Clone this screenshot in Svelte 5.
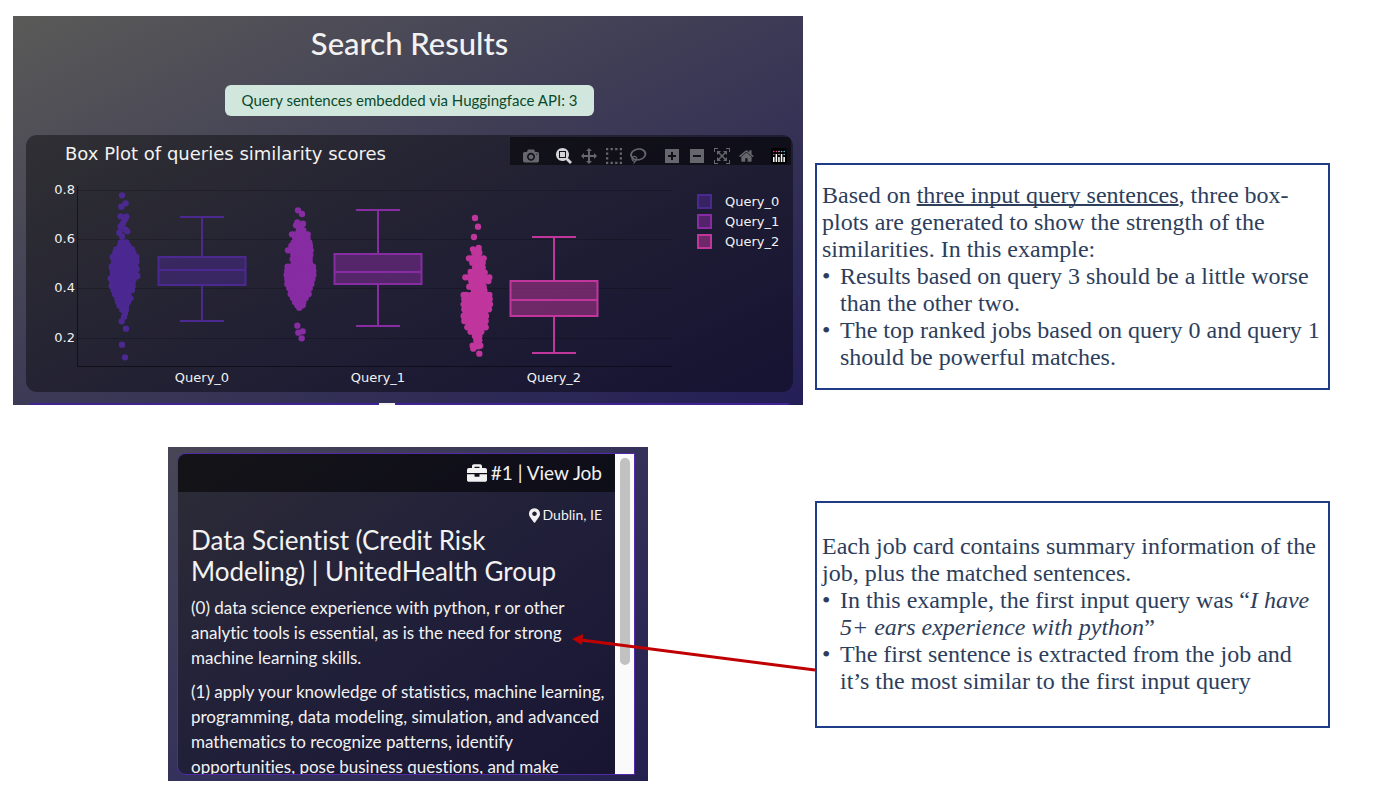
<script>
  // swarm rows are [y, first x, last x] in thirds of a chart unit, measured from the swarm origin
  const traces = [
    {
      name: "Query_0",
      color: "rgb(75,41,145)",
      center: 176, q1: 120, median: 105, q3: 92, low: 156, high: 52,
      origin: [-6, 15],
      loose: [[306, 46], [317, 70], [304, 80], [302, 109], [319, 110], [314, 120], [308, 131], [302, 140], [316, 149], [322, 154], [298, 158], [306, 169], [315, 400], [312, 410], [305, 424], [318, 446], [306, 494], [315, 532]],
      rows: [[187, 303, 319], [198, 300, 325], [208, 289, 336], [218, 286, 340], [231, 278, 349], [245, 282, 349], [259, 275, 346], [268, 277, 350], [280, 279, 346], [288, 282, 352], [295, 272, 343], [305, 277, 338], [318, 275, 338], [330, 281, 336], [343, 285, 325], [355, 292, 331], [366, 294, 324], [377, 299, 318], [389, 307, 318]],
    },
    {
      name: "Query_1",
      color: "rgb(135,44,162)",
      center: 352, q1: 119, median: 107, q3: 89, low: 161, high: 45,
      origin: [224, 15],
      loose: [[144, 91], [156, 102], [142, 127], [159, 131], [138, 136], [148, 383], [142, 437], [158, 454], [145, 458], [155, 475]],
      rows: [[141, 148, 154], [151, 147, 160], [163, 126, 173], [175, 136, 173], [188, 131, 178], [198, 124, 180], [211, 114, 182], [225, 130, 181], [238, 128, 179], [250, 132, 180], [260, 113, 189], [272, 112, 190], [285, 110, 190], [298, 112, 187], [312, 112, 184], [325, 118, 179], [342, 122, 176], [353, 129, 167], [366, 135, 160], [376, 142, 158]],
    },
    {
      name: "Query_2",
      color: "rgb(192,54,157)",
      center: 528, q1: 151, median: 135, q3: 116, low: 188, high: 72,
      origin: [414, 35],
      loose: [[105, 54], [114, 80], [102, 111], [99, 148], [116, 144], [92, 216], [118, 461], [100, 446]],
      rows: [[158, 103, 118], [175, 87, 131], [188, 97, 128], [203, 105, 128], [218, 106, 134], [232, 76, 148], [243, 94, 145], [260, 88, 131], [271, 102, 133], [285, 71, 148], [298, 73, 149], [313, 71, 150], [328, 73, 147], [348, 71, 138], [363, 73, 137], [382, 82, 137], [395, 92, 124], [408, 105, 118], [421, 109, 118], [437, 98, 121]],
    },
  ];

  const ticks = [
    { label: "0.8", y: 25 },
    { label: "0.6", y: 74 },
    { label: "0.4", y: 123 },
    { label: "0.2", y: 173 },
  ];

  function fillRow(dots, y, from, to, r) {
    const n = Math.max(1, Math.round((to - from) / 9));
    for (let i = 0; i <= n; i++) {
      const wobble = i === 0 || i === n ? 0 : ((i * 7 + r * 5) % 5) - 2;
      dots.push([from + ((to - from) * i) / n, y + wobble]);
    }
  }

  function swarm(trace) {
    const dots = [...trace.loose];
    trace.rows.forEach(([y, from, to], r) => {
      fillRow(dots, y, from, to, r);
      // a narrower row in between closes the holes
      const next = trace.rows[r + 1];
      if (next) {
        const left = Math.max(from, next[1]) + 4;
        const right = Math.min(to, next[2]) - 4;
        if (right > left) fillRow(dots, (y + next[0]) / 2, left, right, r + 1);
      }
    });
    return dots;
  }

  const tools = [
    { title: "Download plot as a png", w: 1000, gap: true, d: "m500 450c-83 0-150-67-150-150 0-83 67-150 150-150 83 0 150 67 150 150 0 83-67 150-150 150z m400 150h-120c-16 0-34 13-39 29l-31 93c-6 15-23 28-40 28h-340c-16 0-34-13-39-28l-31-94c-6-15-23-28-40-28h-120c-55 0-100-45-100-100v-450c0-55 45-100 100-100h800c55 0 100 45 100 100v450c0 55-45 100-100 100z m-400-550c-138 0-250 112-250 250 0 138 112 250 250 250 138 0 250-112 250-250 0-138-112-250-250-250z m365 380c-19 0-35 16-35 35 0 19 16 35 35 35 19 0 35-16 35-35 0-19-16-35-35-35z" },
    { title: "Zoom", w: 1000, active: true, d: "m1000-25l-250 251c40 63 63 138 63 218 0 224-182 406-407 406-224 0-406-182-406-406s183-406 407-406c80 0 155 22 218 62l250-250 125 125z m-812 250l0 438 437 0 0-438-437 0z m62 375l313 0 0-312-313 0 0 312z" },
    { title: "Pan", w: 1000, d: "m1000 350l-187 188 0-125-250 0 0 250 125 0-188 187-187-187 125 0 0-250-250 0 0 125-188-188 186-187 0 125 252 0 0-250-125 0 187-188 188 188-125 0 0 250 250 0 0-126 187 188z" },
    { title: "Box Select", w: 1000, d: "m0 850l0-143 143 0 0 143z m286 0l0-143 143 0 0 143z m285 0l0-143 143 0 0 143z m286 0l0-143 143 0 0 143z m-857-286l0-143 143 0 0 143z m857 0l0-143 143 0 0 143z m-857-285l0-143 143 0 0 143z m857 0l0-143 143 0 0 143z m-857-286l0-143 143 0 0 143z m286 0l0-143 143 0 0 143z m285 0l0-143 143 0 0 143z m286 0l0-143 143 0 0 143z" },
    { title: "Lasso Select", w: 1031, gap: true, d: "m1018 538c-36 207-290 336-568 286-277-48-473-256-436-463 10-57 36-108 76-151-13-66 11-137 68-183 34-28 75-41 114-42l-55-70 0 0c-2-1-3-2-4-3-10-14-8-34 5-45 14-11 34-8 45 4 1 1 2 3 2 5l0 0 113 140c16 11 31 24 45 40 4 3 6 7 8 11 48-3 100 0 151 9 278 48 473 255 436 462z m-624-379c-80 14-149 48-197 96 42 42 109 47 156 9 33-26 47-66 41-105z m-187-74c-19 16-33 37-39 60 50-32 109-55 174-68-42-25-95-24-135 8z m360 75c-34-7-69-9-102-8 8 62-16 128-68 170-73 59-175 54-244-5-9 20-16 40-20 61-28 159 121 317 333 354s407-60 434-217c28-159-121-318-333-355z" },
    { title: "Zoom in", w: 875, d: "m1 787l0-875 875 0 0 875-875 0z m687-500l-187 0 0-187-125 0 0 187-188 0 0 125 188 0 0 187 125 0 0-187 187 0 0-125z" },
    { title: "Zoom out", w: 875, d: "m0 788l0-876 875 0 0 876-875 0z m688-500l-500 0 0 125 500 0 0-125z" },
    { title: "Autoscale", w: 1000, d: "m250 850l-187 0-63 0 0-62 0-188 63 0 0 188 187 0 0 62z m688 0l-188 0 0-62 188 0 0-188 62 0 0 188 0 62-62 0z m-875-938l0 188-63 0 0-188 0-62 63 0 187 0 0 62-187 0z m875 188l0-188-188 0 0-62 188 0 62 0 0 62 0 188-62 0z m-125 188l-1 0-93-94-156 156 156 156 92-93 2 0 0 250-250 0 0-2 93-92-156-156-156 156 94 92 0 2-250 0 0-250 0 0 93 93 157-156-157-156-93 94 0 0 0-250 250 0 0 0-94 93 156 157 156-157-93-93 0 0 250 0 0 250z" },
    { title: "Reset axes", w: 929, gap: true, d: "m786 296v-267q0-15-11-26t-25-10h-214v214h-143v-214h-214q-15 0-25 10t-11 26v267q0 1 0 2t0 2l321 264 321-264q1-1 1-4z m124 39l-34-41q-5-5-12-6h-2q-7 0-12 3l-386 322-386-322q-7-4-13-4-7 2-12 7l-35 41q-4 5-3 13t6 12l401 334q18 15 42 15t43-15l136-114v109q0 8 5 13t13 5h107q8 0 13-5t5-13v-227l122-102q5-5 6-12t-4-13z" },
  ];
</script>

<main>
  <section class="results">
    <h1>Search Results</h1>
    <p class="alert">Query sentences embedded via Huggingface API: 3</p>

    <div class="chart">
      <header>
        <h2>Box Plot of queries similarity scores</h2>
        <div class="modebar">
          {#each tools as tool}
            <button type="button" title={tool.title} aria-label={tool.title} class:active={tool.active} class:gap={tool.gap}>
              <svg viewBox="0 0 {tool.w} 1000"><path transform="matrix(1 0 0 -1 0 850)" d={tool.d} /></svg>
            </button>
          {/each}
          <a href="https://plotly.com/" aria-label="Produced with Plotly">
            <svg viewBox="0 0 16 16">
              <rect width="16" height="16" rx="2" fill="#000" />
              <g fill="#fff">
                <rect x="2" y="9" width="1.5" height="5" /><rect x="4.6" y="6" width="1.5" height="8" />
                <rect x="7.2" y="9" width="1.5" height="5" /><rect x="9.8" y="6" width="1.5" height="8" />
                <rect x="12.4" y="9" width="1.5" height="5" />
              </g>
              <g fill="#e0457b"><circle cx="2.8" cy="6.5" r=".8" /><circle cx="2.8" cy="3.5" r=".8" /><circle cx="5.4" cy="3.5" r=".8" /></g>
              <g fill="#c9b4e8"><circle cx="8" cy="6.5" r=".8" /><circle cx="8" cy="3.5" r=".8" /></g>
              <g fill="#5fc4d8"><circle cx="10.6" cy="3.5" r=".8" /><circle cx="13.2" cy="3.5" r=".8" /><circle cx="13.2" cy="6.5" r=".8" /></g>
            </svg>
          </a>
        </div>
      </header>

      <svg class="plot" viewBox="0 0 767 227" role="img" aria-label="Box plot of similarity scores for three queries">
        {#each ticks as tick}
          <line class="grid" x1="52" x2="646" y1={tick.y + 0.5} y2={tick.y + 0.5} />
          <text x="49" y={tick.y + 4} text-anchor="end">{tick.label}</text>
        {/each}
        <path class="axis" d="M51.5 21V201.5H646" />

        {#each traces as trace, i}
          <g fill={trace.color} transform="translate({trace.origin[0]} {trace.origin[1]}) scale(0.33333)">
            {#each swarm(trace) as [x, y]}
              <circle cx={x} cy={y} r="9.5" />
            {/each}
          </g>
          <g stroke={trace.color} stroke-width="2" fill="none">
            <rect x={trace.center - 43.5} y={trace.q3} width="87" height={trace.q1 - trace.q3} fill={trace.color} fill-opacity="0.5" />
            <path d="M{trace.center - 43.5} {trace.median}h87M{trace.center} {trace.q3}V{trace.high}M{trace.center} {trace.q1}V{trace.low}M{trace.center - 22} {trace.high}h44M{trace.center - 22} {trace.low}h44" />
            <rect x="672" y={30 + i * 20} width="13" height="13" fill={trace.color} fill-opacity="0.5" />
          </g>
          <text x={trace.center} y="217" text-anchor="middle">{trace.name}</text>
          <text x="699" y={41 + i * 20}>{trace.name}</text>
        {/each}
      </svg>
    </div>

    <div class="next"></div>
  </section>

  <aside class="note first">
    <p>Based on <u>three input query sentences</u>, three box-<br />plots are generated to show the strength of the<br />similarities. In this example:</p>
    <ul>
      <li>Results based on query 3 should be a little worse<br />than the other two.</li>
      <li>The top ranked jobs based on query 0 and query 1<br />should be powerful matches.</li>
    </ul>
  </aside>

  <section class="jobs">
    <article>
      <div class="card">
        <header>
          <a href="#job">
            <svg viewBox="0 0 512 512" width="20" height="20"><path fill="currentColor" d="M320 336c0 8.840-7.160 16-16 16h-96c-8.840 0-16-7.160-16-16v-48H0v144c0 25.600 22.400 48 48 48h416c25.600 0 48-22.400 48-48V288H320v48zm144-208h-80V80c0-25.600-22.400-48-48-48H176c-25.600 0-48 22.400-48 48v48H48c-25.600 0-48 22.400-48 48v80h512v-80c0-25.600-22.400-48-48-48zm-144 0H192V96h128v32z" /></svg>
            #1 | View Job
          </a>
        </header>
        <div class="body">
          <p class="place">
            <svg viewBox="0 0 384 512" width="11" height="15"><path fill="currentColor" d="M172.268 501.670C26.970 291.031 0 269.413 0 192 0 85.961 85.961 0 192 0s192 85.961 192 192c0 77.413-26.970 99.031-172.268 309.670-9.535 13.774-29.930 13.773-39.464 0zM192 272c44.183 0 80-35.817 80-80s-35.817-80-80-80-80 35.817-80 80 35.817 80 80 80z" /></svg>
            Dublin, IE
          </p>
          <h3>Data Scientist (Credit Risk<br />Modeling) | UnitedHealth Group</h3>
          <p>(0) data science experience with python, r or other<br />analytic tools is essential, as is the need for strong<br />machine learning skills.</p>
          <p>(1) apply your knowledge of statistics, machine learning,<br />programming, data modeling, simulation, and advanced<br />mathematics to recognize patterns, identify<br />opportunities, pose business questions, and make</p>
        </div>
      </div>
      <div class="scrollbar"><div class="thumb"></div></div>
    </article>
  </section>

  <aside class="note">
    <p>Each job card contains summary information of the<br />job, plus the matched sentences.</p>
    <ul>
      <li>In this example, the first input query was “<em>I have<br />5+ ears experience with python</em>”</li>
      <li>The first sentence is extracted from the job and<br />it’s the most similar to the first input query</li>
    </ul>
    <svg class="arrow" viewBox="0 0 246 42" width="246" height="42">
      <path d="M244 36L10 6" stroke="#c00000" stroke-width="3" />
      <path d="M1 5L12 0L11 11z" fill="#c00000" />
    </svg>
  </aside>
</main>

<style>
  :global(body) {
    margin: 0;
    background: #fff;
  }

  main {
    display: grid;
    grid-template-columns: 790fr 515fr;
    column-gap: 12px;
    row-gap: 42px;
    padding: 16px 70px 12px 13px;
    font-family: Lato, sans-serif;
    font-variant-ligatures: none;
  }

  h1, h2, h3, p, ul {
    margin: 0;
  }

  .results, .jobs {
    box-sizing: border-box;
    color: #f2f2f2;
    background: linear-gradient(to bottom right, #5a5a58, #3c3a55 50%, #231e56);
  }

  .results {
    display: flex;
    flex-direction: column;
    align-items: center;
    padding: 8px 10px 0 13px;
  }

  h1 {
    font-size: 31px;
    font-weight: 500;
    line-height: 38px;
  }

  .alert {
    margin: 23px 0 19px;
    padding: 0 17px;
    border-radius: 6px;
    font-size: 15px;
    line-height: 31px;
    color: #0a4a2c;
    background: #d1e7dd;
  }

  .chart {
    width: 100%;
    border-radius: 11px;
    overflow: hidden;
    background: rgba(0, 0, 0, 0.4);
    font-family: Verdana, "DejaVu Sans", sans-serif;
  }

  .chart header {
    display: flex;
    justify-content: space-between;
    padding: 2px 2px 0 39px;
  }

  .chart h2 {
    font-size: 18px;
    font-weight: 400;
    line-height: 34px;
    height: 28px;
  }

  .modebar {
    display: flex;
    align-items: flex-end;
    box-sizing: border-box;
    height: 28px;
    padding: 0 4px 0 8px;
    background: rgba(0, 0, 0, 0.5);
  }

  .modebar button, .modebar a {
    display: flex;
    align-items: center;
    justify-content: center;
    width: 25px;
    height: 18px;
    padding: 0;
    border: 0;
    background: none;
  }

  .modebar button {
    color: #66666d;
  }

  .modebar .active {
    color: #d4d4d8;
  }

  .modebar .gap {
    margin-right: 8px;
  }

  .modebar a {
    width: 16px;
    margin-left: 4px;
  }

  .modebar svg {
    height: 16px;
    fill: currentColor;
  }

  .plot {
    display: block;
    width: 100%;
    font-size: 13px;
    fill: #f2f2f2;
  }

  .grid {
    stroke: rgba(0, 0, 0, 0.2);
  }

  .axis {
    fill: none;
    stroke: rgba(0, 0, 0, 0.5);
  }

  .next {
    align-self: stretch;
    height: 2px;
    margin: 11px 4px 0;
    background: linear-gradient(#f2f2f2, #f2f2f2) 47% 0 / 16px 2px no-repeat #3f2491;
  }

  .note {
    position: relative;
    display: flex;
    flex-direction: column;
    justify-content: center;
    align-self: center;
    box-sizing: border-box;
    min-height: 227px;
    padding: 0 5px;
    border: 2px solid #1f3c88;
    font-family: "Liberation Serif", serif;
    font-size: 24px;
    line-height: 27px;
    color: #2d3e5c;
    white-space: nowrap;
  }

  .note.first {
    align-self: end;
    margin-bottom: 15px;
  }

  .note ul {
    padding: 0;
    list-style: none;
  }

  .note li {
    position: relative;
    padding-left: 18px;
  }

  .note li::before {
    content: "•";
    position: absolute;
    left: 0;
  }

  .note u {
    text-decoration-thickness: 2px;
    text-decoration-skip-ink: none;
  }

  .arrow {
    position: absolute;
    right: 100%;
    top: 131px;
  }

  .jobs {
    justify-self: center;
    width: 480px;
    padding: 6px 13px 6px 9px;
    background: linear-gradient(to bottom right, #484656, #34325a 50%, #24204f);
  }

  article {
    display: flex;
    height: 320px;
    border: 1px solid #5429a8;
    border-radius: 9px 0 0 9px;
    overflow: hidden;
  }

  .card {
    flex: 1;
    min-width: 0;
    background: rgba(0, 0, 0, 0.36);
    white-space: nowrap;
  }

  .card header {
    height: 38px;
    padding: 0 13px;
    text-align: right;
    background: rgba(0, 0, 0, 0.55);
  }

  .card a {
    display: inline-flex;
    align-items: center;
    gap: 4px;
    font-size: 19px;
    line-height: 37px;
    color: inherit;
    text-decoration: none;
  }

  .body {
    padding: 13px;
    font-size: 17px;
    line-height: 25px;
  }

  .body p {
    margin-bottom: 9px;
  }

  .body .place {
    display: flex;
    align-items: center;
    justify-content: flex-end;
    gap: 3px;
    margin: 0;
    font-size: 14px;
    line-height: 20px;
  }

  h3 {
    margin-bottom: 8px;
    font-size: 26px;
    font-weight: 400;
    line-height: 31px;
  }

  .scrollbar {
    flex: none;
    box-sizing: border-box;
    width: 19px;
    padding: 4px 4px 0 5px;
    background: #fafafa;
  }

  .thumb {
    height: 207px;
    border-radius: 5px;
    background: #c1c1c1;
  }
</style>
